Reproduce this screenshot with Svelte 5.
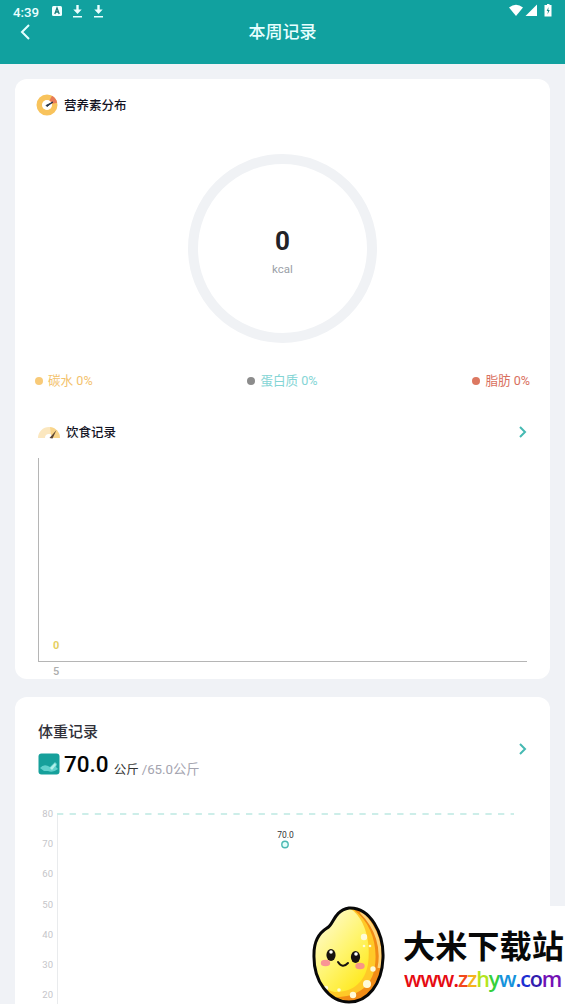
<script lang="ts">
  const legend = [
    { label: '碳水', value: 0, dot: '#f8ca78', color: '#f3c26c' },
    { label: '蛋白质', value: 0, dot: '#8c8c8c', color: '#84d5d5' },
    { label: '脂肪', value: 0, dot: '#dc7861', color: '#d9705e' },
  ];

  const ticks = [80, 70, 60, 50, 40, 30, 20];

  // one colour per letter of the site address
  const site = [
    { text: 'www.', color: '#e60b12' },
    { text: 'z', color: '#f2481b' },
    { text: 'z', color: '#f5b21c' },
    { text: 'h', color: '#b4e51c' },
    { text: 'y', color: '#35d03a' },
    { text: 'w', color: '#1593dc' },
    { text: '.', color: '#1857d8' },
    { text: 'c', color: '#1c2fd2' },
    { text: 'o', color: '#321cae' },
    { text: 'm', color: '#7411b5' },
  ];
</script>

{#snippet chevron()}
  <svg class="chevron" width="8" height="12" viewBox="0 0 8 12">
    <path d="M1 1 L6 6 L1 11" fill="none" stroke="#45b9b2" stroke-width="2" />
  </svg>
{/snippet}

<div class="screen">
  <header>
    <div class="status">
      <span class="time">4:39</span>
      <svg class="app" width="10" height="10" viewBox="0 0 10 10">
        <rect width="10" height="10" rx="1.5" fill="#f0ffff" />
        <path d="M2.8 8 L5 2 L7.2 8 M3.5 6 H6.5" fill="none" stroke="#167d7b" stroke-width="1.3" />
      </svg>
      {#each [1, 2] as n (n)}
        <svg class="download" width="11" height="13" viewBox="0 0 11 13">
          <path d="M4.3 0 H6.7 V4.5 H9.7 L5.5 9 L1.3 4.5 H4.3 Z M1 11 H10 V12.5 H1 Z" fill="#eaffff" />
        </svg>
      {/each}
      <svg class="signals" width="44" height="14" viewBox="0 0 44 14">
        <path d="M0 3.5 Q7 -2 14 3.5 L7 12 Z" fill="#fff" />
        <path d="M16.5 12 L28 0.5 V12 Z" fill="#fff" />
        <path d="M36 1 H38 V0 H40.5 V1 H42.5 V12.5 H35.5 V1 Z" fill="#fff" />
        <path d="M39.5 3 L37.7 7 H39 L38.5 10.5 L40.7 6 H39.3 Z" fill="#168c8a" />
      </svg>
    </div>
    <div class="nav">
      <svg class="back" width="12" height="18" viewBox="0 0 12 18">
        <path d="M10 2 L3 9 L10 16" fill="none" stroke="#e4ffff" stroke-width="2" />
      </svg>
      <h1>本周记录</h1>
    </div>
  </header>

  <main>
    <section class="card nutrition">
      <div class="heading">
        <svg width="22" height="22" viewBox="0 0 22 22">
          <circle cx="11" cy="11" r="7.5" fill="none" stroke="#f8c35c" stroke-width="6" />
          <path d="M11 11 L16 1.8 A10.5 10.5 0 0 1 21.2 8.8 Z" fill="#e77b57" />
          <circle cx="11" cy="11" r="5" fill="#fff" />
          <path d="M10 11.5 L17 8 L11 12.5 Z" fill="#253349" stroke="#253349" />
        </svg>
        <h2>营养素分布</h2>
      </div>

      <div class="ring">
        <strong>0</strong>
        <span>kcal</span>
      </div>

      <div class="legend">
        {#each legend as item (item.label)}
          <div class="entry" style="color: {item.color}">
            <i style="background: {item.dot}"></i>{item.label} {item.value}%
          </div>
        {/each}
      </div>

      <div class="heading diet">
        <svg width="22" height="13" viewBox="0 0 22 13">
          <path d="M0 12 A11 11 0 0 1 22 12 L15 12 A4 4 0 0 0 7 12 Z" fill="#fbe7bf" />
          <path d="M12 1.1 A11 11 0 0 1 22 12 L15 12 L13 8.5 Z" fill="#f9d58b" />
          <path d="M18.5 4 L14.5 12.5 L11.5 12 Z" fill="#5b4433" />
        </svg>
        <h2>饮食记录</h2>
        {@render chevron()}
      </div>

      <div class="diet-chart"><span>0</span></div>
      <div class="day">5</div>
    </section>

    <section class="card weight">
      <h3>体重记录</h3>
      <div class="reading">
        <svg width="22" height="22" viewBox="0 0 22 22">
          <rect x="0.5" y="0.5" width="21" height="21" rx="3" fill="#16a09b" />
          <path d="M2 15 Q6 10 12 14 L17 9 L19 11 L18 14 L20 16 Q15 20 10 18 H6 Z" fill="#61d1cc" />
          <path d="M12 15 L17 10 L18 12 L14 17 Z" fill="#b3f0e9" />
        </svg>
        <strong>70.0</strong>
        <span class="unit">公斤</span>
        <span class="goal">/65.0公斤</span>
        {@render chevron()}
      </div>

      <div class="weight-chart">
        <div class="ticks">
          {#each ticks as tick (tick)}
            <span>{tick}</span>
          {/each}
        </div>
        <svg width="460" height="200" viewBox="0 0 460 200">
          <path d="M0.5 2 V200" stroke="#e9ebed" />
          <path d="M0 1 H457" stroke="#cdeee9" stroke-width="2" stroke-dasharray="6.3 6.3" />
          <text x="228.5" y="25" text-anchor="middle">70.0</text>
          <circle cx="228" cy="31.5" r="3.2" fill="#e2fffb" stroke="#4bb9b2" stroke-width="1.4" />
        </svg>
      </div>
    </section>
  </main>

  <aside class="watermark">
    <svg width="74" height="98" viewBox="0 0 74 98">
      <defs>
        <clipPath id="grain">
          <path d="M38 2 C59 1 73 27 72 52 C71 78 57 96 38 96 C18 96 2 75 3 48 C3 35 8 27 16 22 C23 19 22 5 38 2 Z" />
        </clipPath>
        <linearGradient id="skin" x1="0" y1="0" x2="0.8" y2="1">
          <stop offset="0.25" stop-color="#fff9ba" />
          <stop offset="0.6" stop-color="#fff56e" />
          <stop offset="1" stop-color="#ffe81b" />
        </linearGradient>
      </defs>
      <g clip-path="url(#grain)">
        <rect width="74" height="98" fill="#f39a18" />
        <path d="M38 0 C58 12 70 38 67 65 C65 82 56 91 41 94 L20 93 L0 70 V0 Z" fill="#ffc928" />
        <path d="M43 4 C61 17 68 42 63 65 C59 81 46 91 25 91 L44 98 L74 85 V12 Z" fill="#f18c16" />
        <path d="M38 2 C54 11 60 36 57 58 C54 76 42 86 24 86 C10 84 0 65 0 45 V0 Z" fill="url(#skin)" />
        <path d="M50 6 C66 22 72 42 68 62" fill="none" stroke="#ffd477" stroke-width="3" />
        <g fill="#fffbd8">
          <circle cx="53" cy="31" r="3.2" />
          <circle cx="53" cy="40" r="1.3" />
          <circle cx="59" cy="40" r="1.3" />
          <circle cx="62" cy="63" r="2.7" />
          <circle cx="56" cy="78" r="4" />
          <circle cx="42" cy="89" r="3.2" />
          <circle cx="15" cy="82" r="2.2" />
          <circle cx="28" cy="84" r="1.8" />
        </g>
      </g>
      <path
        d="M38 2 C59 1 73 27 72 52 C71 78 57 96 38 96 C18 96 2 75 3 48 C3 35 8 27 16 22 C23 19 22 5 38 2 Z"
        fill="none"
        stroke="#080808"
        stroke-width="3"
      />
      <ellipse cx="20" cy="49" rx="4.6" ry="6" fill="#17120f" />
      <ellipse cx="44.5" cy="51" rx="4.6" ry="6" fill="#17120f" />
      <circle cx="20" cy="46" r="1.8" fill="#fff" />
      <circle cx="45" cy="48" r="1.8" fill="#fff" />
      <ellipse cx="14.5" cy="57" rx="4.7" ry="3.2" fill="#f99595" />
      <ellipse cx="49" cy="60" rx="4.7" ry="3.2" fill="#f99585" />
      <path d="M27 56 Q31.5 63 37 57" fill="none" stroke="#17120f" stroke-width="2" stroke-linecap="round" />
    </svg>
    <div class="brand">
      <b>大米下载站</b>
      <div class="site">
        {#each site as part, i (i)}<span style="color: {part.color}">{part.text}</span>{/each}
      </div>
    </div>
  </aside>
</div>

<style>
  :global(body) {
    margin: 0;
  }

  .screen {
    position: relative;
    width: 565px;
    height: 1004px;
    overflow: hidden;
    background: #f0f2f6;
    font-family: Roboto, 'Noto Sans CJK SC', sans-serif;
  }

  svg {
    display: block;
    flex: none;
  }

  h1,
  h2,
  h3 {
    margin: 0;
    font-weight: 500;
  }

  header {
    height: 64px;
    background: #11a19f;
  }

  .status {
    display: flex;
    align-items: center;
    height: 22px;
    padding: 0 13px;
    color: #eaffff;
  }

  .time {
    width: 39px;
    padding-top: 2px;
    font-size: 13.3px;
    font-weight: 500;
  }

  .app {
    margin-right: 10px;
  }

  .download {
    margin-right: 10px;
  }

  .signals {
    margin-left: auto;
    margin-right: -1px;
  }

  .nav {
    display: grid;
    grid-template-columns: 40px 1fr 40px;
    align-items: center;
    height: 20px;
  }

  .back {
    margin-left: 19px;
  }

  h1 {
    color: #e8ffff;
    font-size: 17px;
    line-height: 20px;
    text-align: center;
  }

  main {
    display: flex;
    flex-direction: column;
    gap: 18px;
    padding: 15px 15px 0;
  }

  .card {
    box-sizing: border-box;
    border-radius: 12px;
    background: #fff;
  }

  .nutrition {
    height: 600px;
    padding-top: 15px;
  }

  .heading {
    display: flex;
    align-items: center;
    gap: 6px;
    height: 22px;
    padding: 0 23px 0 21px;
  }

  .chevron {
    margin-left: auto;
  }

  h2 {
    padding-top: 2px;
    color: #12121f;
    font-size: 12.5px;
    line-height: 20px;
  }

  .ring {
    display: flex;
    flex-direction: column;
    align-items: center;
    box-sizing: border-box;
    width: 189px;
    height: 189px;
    margin: 38px auto 0;
    padding-top: 61px;
    border: 10px solid #f0f2f5;
    border-radius: 50%;
  }

  .ring strong {
    color: #222227;
    font-size: 26px;
    font-weight: 700;
    line-height: 32px;
  }

  .ring span {
    margin-top: 4px;
    color: #9b9fa8;
    font-size: 11.5px;
    line-height: 16px;
  }

  .legend {
    display: flex;
    justify-content: space-between;
    margin-top: 26px;
    padding: 0 20px;
    font-size: 12.6px;
    line-height: 22px;
  }

  .entry {
    display: flex;
    align-items: center;
    height: 23px;
    white-space: pre;
  }

  .entry i {
    width: 8px;
    height: 8px;
    margin-right: 5px;
    border-radius: 50%;
  }

  .diet {
    margin-top: 29px;
    padding-left: 23px;
  }

  .diet-chart {
    display: flex;
    align-items: flex-end;
    box-sizing: border-box;
    height: 204px;
    margin: 15px 23px 0;
    padding: 0 0 8px 14px;
    border: solid #b5b5b5;
    border-width: 0 0 1px 1px;
    color: #e5cf62;
    font-size: 11px;
    font-weight: 700;
    line-height: 15px;
  }

  .day {
    padding: 2px 0 0 38px;
    color: #adadad;
    font-size: 11px;
    font-weight: 500;
    line-height: 15px;
  }

  .weight {
    height: 330px;
    padding-top: 23px;
  }

  h3 {
    padding-left: 23px;
    color: #303039;
    font-size: 15px;
    line-height: 25px;
  }

  .reading {
    display: flex;
    align-items: center;
    height: 30px;
    margin-top: 4px;
    padding: 0 23px;
  }

  .reading strong {
    margin: 0 5px 0 4px;
    color: #050505;
    font-size: 22.5px;
    font-weight: 500;
  }

  .unit {
    padding-top: 9px;
    color: #333;
    font-size: 12.5px;
  }

  .goal {
    margin-left: 3px;
    padding-top: 9px;
    color: #a4a4af;
    font-size: 13.3px;
  }

  .reading .chevron {
    margin-top: -30px;
  }

  .weight-chart {
    display: flex;
    margin-top: 30px;
    padding-left: 26px;
  }

  .ticks {
    display: flex;
    flex-direction: column;
    width: 12px;
    margin-top: -2px;
    margin-right: 4px;
    color: #c5c5c9;
    font-size: 9.5px;
    line-height: 14px;
    gap: 16.2px;
    text-align: right;
  }

  .weight-chart svg {
    margin-top: 4px;
  }

  .weight-chart text {
    fill: #333;
    font-size: 8.5px;
  }

  .watermark {
    position: absolute;
    right: 0;
    bottom: 0;
    display: flex;
    box-sizing: border-box;
    width: 257px;
    height: 98px;
    padding-left: 3px;
    background: #fff;
  }

  .brand {
    width: 163px;
    margin-left: 18px;
    padding-top: 20px;
    white-space: nowrap;
  }

  .brand b {
    display: block;
    color: #080808;
    font-size: 32.2px;
    font-weight: 700;
    line-height: 42px;
  }

  .site {
    margin-top: -2px;
    padding-left: 1px;
    font-family: 'Open Sans', sans-serif;
    font-size: 21.5px;
    font-weight: 600;
    line-height: 26px;
    letter-spacing: -1.15px;
  }
</style>
